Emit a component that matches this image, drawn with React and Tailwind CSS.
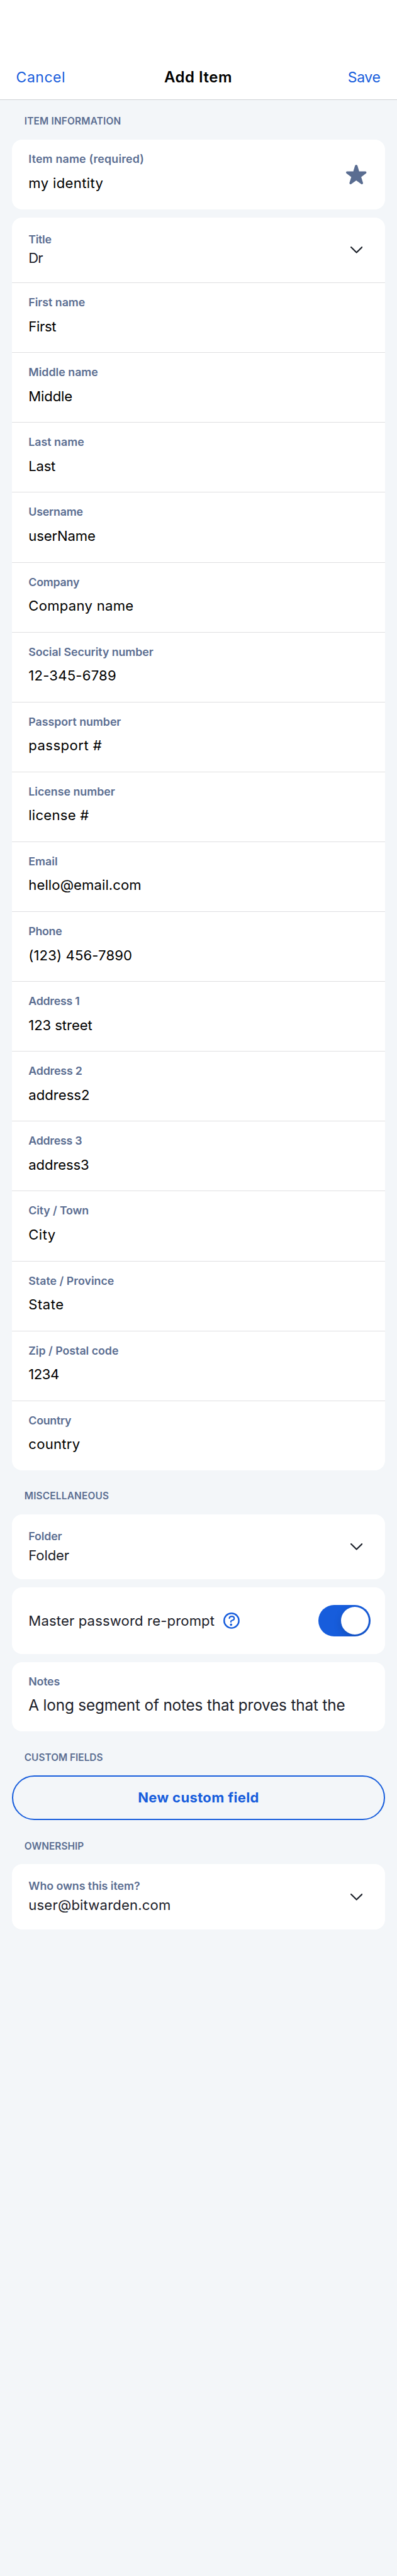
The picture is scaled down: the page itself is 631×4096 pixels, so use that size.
import React from "react";

const identityFields = [
  { label: "First name", value: "First", labelTrack: "tracking-[-0.03px]", valueTrack: "tracking-[-0.33px]" },
  { label: "Middle name", value: "Middle", labelTrack: "tracking-[0.01px]", valueTrack: "tracking-[-0.14px]" },
  { label: "Last name", value: "Last", labelTrack: "tracking-normal", valueTrack: "tracking-[-0.24px]" },
  { label: "Username", value: "userName", labelTrack: "tracking-[-0.2px]", valueTrack: "tracking-[-0.15px]" },
  { label: "Company", value: "Company name", labelTrack: "tracking-[-0.22px]", valueTrack: "tracking-[0.27px]" },
  { label: "Social Security number", value: "12-345-6789", labelTrack: "tracking-[-0.07px]", valueTrack: "tracking-[0.22px]" },
  { label: "Passport number", value: "passport #", labelTrack: "tracking-[-0.03px]", valueTrack: "tracking-[0.46px]" },
  { label: "License number", value: "license #", labelTrack: "tracking-[-0.01px]", valueTrack: "tracking-[0.24px]" },
  { label: "Email", value: "hello@email.com", labelTrack: "tracking-[0.01px]", valueTrack: "tracking-[0.09px]" },
  { label: "Phone", value: "(123) 456-7890", labelTrack: "tracking-[-0.29px]", valueTrack: "tracking-[0.13px]" },
  { label: "Address 1", value: "123 street", labelTrack: "tracking-[-0.27px]", valueTrack: "tracking-[-0.08px]" },
  { label: "Address 2", value: "address2", labelTrack: "tracking-[-0.19px]", valueTrack: "tracking-[0.02px]" },
  { label: "Address 3", value: "address3", labelTrack: "tracking-[-0.27px]", valueTrack: "tracking-[-0.12px]" },
  { label: "City / Town", value: "City", labelTrack: "tracking-[-0.14px]", valueTrack: "tracking-[0.43px]" },
  { label: "State / Province", value: "State", labelTrack: "tracking-[0.01px]", valueTrack: "tracking-[0.5px]" },
  { label: "Zip / Postal code", value: "1234", labelTrack: "tracking-[-0.02px]", valueTrack: "tracking-[-0.48px]" },
  { label: "Country", value: "country", labelTrack: "tracking-[-0.25px]", valueTrack: "tracking-[0.27px]" },
];

function StarIcon() {
  return (
    <svg className="h-[31.1px] w-[32.4px]" viewBox="90 75 180 173" fill="#5a6d91">
      <path d="M169 84Q172 75 180 75Q188 75 191 84L206 133L261 133C271 133 273 146 266 152L224 184L240 235C241 245 232 251 225 246L180 214L135 246C128 251 119 245 120 235L136 184L94 152C87 146 89 133 99 133L154 133Z" />
    </svg>
  );
}

function ChevronIcon() {
  return (
    <svg className="mr-[6.5px] h-[10.8px] w-[19.4px]" viewBox="126 84 108 60" fill="none" stroke="#1b2029" strokeWidth="12" strokeLinecap="round" strokeLinejoin="round">
      <path d="M132 90L180 137L228 90" />
    </svg>
  );
}

function HelpIcon() {
  return (
    <svg className="h-[25.9px] w-[25.9px]" viewBox="57 102 144 144" fill="none" stroke="#175ddc" strokeLinecap="round">
      <circle cx="129" cy="174" r="65" strokeWidth="13.5" />
      <path d="M110 153C112 130 153 130 153 155C153 176 125 168 124 179L124 186" strokeWidth="12" />
      <circle cx="125" cy="210" r="10" fill="#175ddc" stroke="none" />
    </svg>
  );
}

function SectionTitle({ children, className }) {
  return (
    <h2 className={`pl-[19.4px] text-[15.4px] leading-[20px] font-semibold text-[#5a6d91] ${className}`}>
      {children}
    </h2>
  );
}

function Card({ children, className = "" }) {
  return <section className={`overflow-hidden rounded-[16px] bg-white ${className}`}>{children}</section>;
}

function Field({ label, value, labelTrack, valueTrack, valueClass = "text-[22.1px] text-black", className = "", children }) {
  return (
    <div className={`flex items-center justify-between pr-[29.1px] pl-[25.9px] ${className}`}>
      <div className="flex flex-col gap-[10.5px] self-start pt-[19px]">
        <span className={`text-[17.8px] leading-[24px] font-semibold text-[#5a6d91] ${labelTrack}`}>{label}</span>
        <span className={`leading-[30px] whitespace-nowrap ${valueClass} ${valueTrack}`}>{value}</span>
      </div>
      {children}
    </div>
  );
}

function SelectField({ label, value, labelTrack, valueTrack, className = "" }) {
  return (
    <div className={`flex h-[103.5px] items-center justify-between pr-[29.1px] pl-[25.9px] ${className}`}>
      <div className="flex flex-col gap-[2.8px] self-start pt-[23px]">
        <span className={`text-[17.8px] leading-[24px] font-semibold text-[#5a6d91] ${labelTrack}`}>{label}</span>
        <span className={`text-[22.1px] leading-[30px] text-[#1b2029] ${valueTrack}`}>{value}</span>
      </div>
      <ChevronIcon />
    </div>
  );
}

export default function App() {
  return (
    <div className="h-[4096px] w-[631px] overflow-hidden bg-[#f3f6f9] font-['Inter',sans-serif]">
      <header className="grid h-[159px] grid-cols-3 items-end border-b border-[#ced1d4] bg-white pr-[26.5px] pb-[19.8px] pl-[25.6px] leading-[30px]">
        <button className="text-left text-[23px] tracking-[0.5px] text-[#175ddc]">Cancel</button>
        <h1 className="text-center text-[24px] font-semibold tracking-[0.5px] text-black">Add Item</h1>
        <button className="text-right text-[23px] tracking-[-0.37px] text-[#175ddc]">Save</button>
      </header>

      <main className="px-[19.4px]">
        <SectionTitle className="mt-[24.4px] tracking-[0.18px]">ITEM INFORMATION</SectionTitle>
        <Card className="mt-[18.8px]">
          <Field className="h-[110.5px]" label="Item name (required)" value="my identity" labelTrack="tracking-[0.18px]" valueTrack="tracking-[0.34px]">
            <StarIcon />
          </Field>
        </Card>

        <Card className="mt-[13px]">
          <SelectField label="Title" value="Dr" labelTrack="tracking-[-0.29px]" valueTrack="tracking-[-1px]" />
          {identityFields.map((field) => (
            <Field key={field.label} className="h-[111.1px] border-t border-[#dfdfe1]" {...field} />
          ))}
        </Card>

        <SectionTitle className="mt-[31.4px] tracking-[0.19px]">MISCELLANEOUS</SectionTitle>
        <Card className="mt-[18.8px]">
          <SelectField label="Folder" value="Folder" labelTrack="tracking-[-0.13px]" valueTrack="tracking-[-0.12px]" />
        </Card>
        <Card className="mt-[13px] flex h-[105.1px] items-center pr-[22.7px] pl-[25.9px]">
          <span className="text-[22.1px] leading-[30px] tracking-[0.14px] text-[#1b2029]">Master password re-prompt</span>
          <span className="ml-[13.6px]">
            <HelpIcon />
          </span>
          <span className="ml-auto flex h-[50.2px] w-[82.5px] items-center justify-end overflow-hidden rounded-full bg-[#175ddc] pr-[3.1px]">
            <span className="h-[43.9px] w-[43.9px] rounded-full bg-white shadow-[0_5px_13px_rgba(0,0,0,0.15)]" />
          </span>
        </Card>
        <Card className="mt-[13px]">
          <Field className="h-[110.5px]" label="Notes" value="A long segment of notes that proves that the" labelTrack="tracking-[-0.21px]" valueTrack="tracking-[-0.16px]" valueClass="text-[24.3px] text-[#1b2029]" />
        </Card>

        <SectionTitle className="mt-[31.6px]">CUSTOM FIELDS</SectionTitle>
        <button className="mt-[18.5px] flex h-[71.3px] w-full items-center justify-center rounded-full border-[2.4px] border-[#175ddc] pb-[2px] text-[22px] leading-[30px] font-bold tracking-[0.35px] text-[#175ddc]">
          New custom field
        </button>

        <SectionTitle className="mt-[31.2px] tracking-[0.06px]">OWNERSHIP</SectionTitle>
        <Card className="mt-[18.8px]">
          <SelectField label="Who owns this item?" value="user@bitwarden.com" labelTrack="tracking-[-0.04px]" valueTrack="tracking-[0.17px]" />
        </Card>
      </main>
    </div>
  );
}
